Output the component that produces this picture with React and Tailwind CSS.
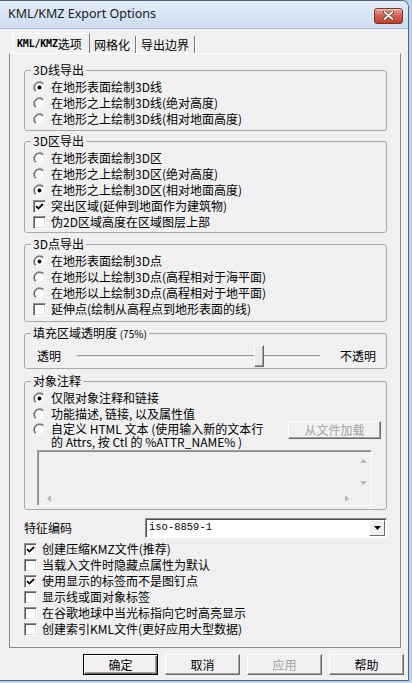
import React from "react";

const F = "font-['Noto_Sans_CJK_SC',sans-serif]";

function Radio({ checked }) {
  return (
    <svg width="13" height="13" viewBox="0 0 13 13" className="shrink-0">
      <circle cx="6.5" cy="6.5" r="5" fill="#fff" />
      <path d="M2.26 10.74 A6 6 0 0 1 10.74 2.26" fill="none" stroke="#8f8f8f" />
      <path d="M2.96 10.04 A5 5 0 0 1 10.04 2.96" fill="none" stroke="#505050" />
      <path d="M10.74 2.26 A6 6 0 0 1 2.26 10.74" fill="none" stroke="#ffffff" />
      <path d="M10.04 2.96 A5 5 0 0 1 2.96 10.04" fill="none" stroke="#e6e6e6" />
      {checked && <circle cx="6.5" cy="6.5" r="2" fill="#000" />}
    </svg>
  );
}

function Check({ checked }) {
  return (
    <span className="w-[13px] h-[13px] shrink-0 bg-white border border-t-[#8f8f8f] border-l-[#8f8f8f] border-r-white border-b-white shadow-[inset_1px_1px_0_#5a5a5a,inset_-1px_-1px_0_#e3e3e3] flex items-center justify-center">
      {checked && (
        <svg width="9" height="9" viewBox="0 0 9 9">
          <path d="M1 4.2 L3.4 6.6 L8 2" fill="none" stroke="#000" strokeWidth="1.8" />
        </svg>
      )}
    </span>
  );
}

function RRow({ checked, children }) {
  return (
    <div className="flex items-center h-[16px] gap-[5px]">
      <Radio checked={checked} />
      <span className="text-[12px] leading-[16px] whitespace-nowrap">{children}</span>
    </div>
  );
}

function CRow({ checked, children }) {
  return (
    <div className="flex items-center h-[16px] gap-[5px]">
      <Check checked={checked} />
      <span className="text-[12px] leading-[16px] whitespace-nowrap">{children}</span>
    </div>
  );
}

function Group({ label, className, children }) {
  return (
    <fieldset className={"border border-[#a9a9a9] rounded-[3px] px-[8px] min-w-0 " + (className || "")}>
      <legend className="ml-[-2px] px-[2px] text-[12px] leading-[14px] whitespace-nowrap">{label}</legend>
      {children}
    </fieldset>
  );
}

function Btn({ children, def, disabled }) {
  return (
    <div
      className={
        "w-[75px] h-[21px] flex items-center justify-center text-[12px] " +
        (def
          ? "border border-black bg-[#f0f0f0] shadow-[inset_1px_1px_0_#ffffff,inset_-1px_-1px_0_#696969,inset_-2px_-2px_0_#a0a0a0]"
          : "border border-t-white border-l-white border-r-[#696969] border-b-[#696969] bg-[#f0f0f0] shadow-[inset_-1px_-1px_0_#a0a0a0]") +
        (disabled ? " text-[#a0a0a0]" : " text-black")
      }
    >
      {children}
    </div>
  );
}

function Tri({ dir }) {
  const d = {
    up: "M0 4 L3.5 0 L7 4 Z",
    down: "M0 0 L7 0 L3.5 4 Z",
    left: "M4 0 L4 7 L0 3.5 Z",
    right: "M0 0 L0 7 L4 3.5 Z",
  }[dir];
  const w = dir === "up" || dir === "down" ? 7 : 4;
  const h = dir === "up" || dir === "down" ? 4 : 7;
  return (
    <svg width={w} height={h} viewBox={`0 0 ${w} ${h}`}>
      <path d={d} fill="#b8b8b8" />
    </svg>
  );
}

export default function App() {
  return (
    <div className={"w-[412px] h-[683px] bg-[#bcd1ea] overflow-hidden text-black " + F}>
      <div className="w-[409px] h-[681px] flex flex-col border-t border-r border-b border-[#51647e] rounded-tr-[7px] bg-[#d3e1f1]">
        {/* title bar */}
        <div className="h-[27px] shrink-0 flex items-center rounded-tr-[6px] bg-linear-to-b from-[#e2ecf7] to-[#cddef0]">
          <span className="pl-[8px] text-[12.5px] text-[#1a1a1a] font-['Noto_Sans',sans-serif] leading-none">
            KML/KMZ Export Options
          </span>
          <div className="ml-auto mr-[5px] mt-[2px] w-[29px] h-[16px] rounded-[3px] border border-[#7d3326] bg-linear-to-b from-[#e5a294] via-[#d0604c] to-[#c2402b] flex items-center justify-center shadow-[inset_0_1px_0_#f2c6bc]">
            <svg width="11" height="9" viewBox="0 0 11 9">
              <path d="M1.5 1 L9.5 8 M9.5 1 L1.5 8" stroke="#5a2419" strokeWidth="3.2" strokeLinecap="round" />
              <path d="M1.5 1 L9.5 8 M9.5 1 L1.5 8" stroke="#ffffff" strokeWidth="1.8" strokeLinecap="round" />
            </svg>
          </div>
        </div>

        {/* body */}
        <div className="flex-1 bg-[#f0f0f0] border-t border-[#a9bbd0] flex flex-col">
          {/* tabs */}
          <div className="mt-[4px] ml-[12px] h-[20px] flex items-end text-[12px]">
            <div className="w-[78px] h-[20px] pl-[4px] flex items-center border-l border-t border-white border-r border-r-[#7a7a7a] leading-none whitespace-nowrap">
              <span className="font-['DejaVu_Sans_Mono',monospace] text-[10px] font-bold tracking-[-0.2px]">KML/KMZ</span>
              <span>选项</span>
            </div>
            <div className="w-[46px] h-[17px] pl-[4px] flex items-center border-r border-[#7a7a7a] leading-none whitespace-nowrap shadow-[1px_0_0_#ffffff]">
              网格化
            </div>
            <div className="w-[59px] h-[17px] pl-[5px] flex items-center border-r border-[#7a7a7a] leading-none whitespace-nowrap shadow-[1px_0_0_#ffffff]">
              导出边界
            </div>
          </div>

          {/* panel */}
          <div className="ml-[9px] w-[392px] border border-t-white border-l-[#8a8a8a] border-r-[#8a8a8a] border-b-[#8a8a8a] pt-[9px] pl-[14px] pr-[13px] pb-[10px] flex flex-col">
            <Group label="3D线导出" className="pt-[2px] pb-[3px]">
              <RRow checked>在地形表面绘制3D线</RRow>
              <RRow>在地形之上绘制3D线(绝对高度)</RRow>
              <RRow>在地形之上绘制3D线(相对地面高度)</RRow>
            </Group>

            <Group label="3D区导出" className="mt-[3px] pt-[2px] pb-[2px]">
              <RRow>在地形表面绘制3D区</RRow>
              <RRow>在地形之上绘制3D区(绝对高度)</RRow>
              <RRow checked>在地形之上绘制3D区(相对地面高度)</RRow>
              <CRow checked>突出区域(延伸到地面作为建筑物)</CRow>
              <CRow>伪2D区域高度在区域图层上部</CRow>
            </Group>

            <Group label="3D点导出" className="mt-[4px] pt-[2px] pb-[4px]">
              <RRow checked>在地形表面绘制3D点</RRow>
              <RRow>在地形以上绘制3D点(高程相对于海平面)</RRow>
              <RRow>在地形以上绘制3D点(高程相对于地平面)</RRow>
              <CRow>延伸点(绘制从高程点到地形表面的线)</CRow>
            </Group>

            <Group
              label={
                <span>
                  填充区域透明度 <span className="text-[10px]">(75%)</span>
                </span>
              }
              className="mt-[4px] pt-[3px]"
            >
              <div className="flex items-center h-[24px] text-[12px]">
                <span className="ml-[4px] whitespace-nowrap">透明</span>
                <div className="ml-[16px] w-[243px] h-[22px] relative flex items-center">
                  <div className="w-full h-[3px] border-t border-[#a0a0a0] border-b border-b-white bg-[#dcdcdc]" />
                  <div className="absolute left-[177px] top-0 w-[10px] h-[22px] bg-[#ececec] border border-t-white border-l-white border-r-[#696969] border-b-[#696969] shadow-[inset_-1px_-1px_0_#a0a0a0]" />
                </div>
                <span className="ml-[20px] whitespace-nowrap">不透明</span>
              </div>
            </Group>

            <Group label="对象注释" className="mt-[5px] pt-[2px] pb-[3px]">
              <RRow checked>仅限对象注释和链接</RRow>
              <RRow>功能描述, 链接, 以及属性值</RRow>
              <div className="flex items-start h-[26px]">
                <div className="mt-[1px]">
                  <Radio />
                </div>
                <div className="ml-[5px] text-[12px] leading-[13px] whitespace-nowrap">
                  <div className="h-[13px]">自定义 HTML 文本 (使用输入新的文本行</div>
                  <div className="h-[13px]">的 Attrs, 按 Ctl 的 %ATTR_NAME% )</div>
                </div>
                <div className="ml-auto -mr-[3px] -mt-[1px] w-[93px] h-[18px] border border-t-white border-l-white border-r-[#696969] border-b-[#696969] shadow-[inset_-1px_-1px_0_#a0a0a0] flex items-center justify-center text-[12px] text-[#a3a3a3]">
                  从文件加载
                </div>
              </div>
              <div className="ml-[4px] mr-[6px] mt-[2px] h-[56px] border border-t-[#a0a0a0] border-l-[#a0a0a0] border-r-white border-b-white shadow-[inset_1px_1px_0_#8a8a8a] grid grid-cols-[1fr_16px] grid-rows-[1fr_14px]">
                <div />
                <div className="flex flex-col items-center pt-[8px] gap-[18px]">
                  <Tri dir="up" />
                  <Tri dir="down" />
                </div>
                <div className="flex items-center justify-between pl-[9px] pr-[6px]">
                  <Tri dir="left" />
                  <Tri dir="right" />
                </div>
                <div />
              </div>
            </Group>

            <div className="mt-[8px] h-[20px] flex items-center justify-between text-[12px]">
              <span className="whitespace-nowrap">特征编码</span>
              <div className="w-[242px] h-[20px] bg-white border border-t-[#8a8a8a] border-l-[#8a8a8a] border-r-white border-b-white shadow-[inset_1px_1px_0_#505050] flex items-center">
                <span className="pl-[3px] text-[10.5px] font-['Liberation_Mono',monospace]">iso-8859-1</span>
                <div className="ml-auto mr-[1px] w-[16px] h-[16px] bg-[#f0f0f0] border border-t-white border-l-white border-r-[#696969] border-b-[#696969] flex items-center justify-center">
                  <svg width="7" height="4" viewBox="0 0 7 4">
                    <path d="M0 0 L7 0 L3.5 4 Z" fill="#000" />
                  </svg>
                </div>
              </div>
            </div>

            <div className="mt-[3px] flex flex-col">
              <CRow checked>创建压缩KMZ文件(推荐)</CRow>
              <CRow>当载入文件时隐藏点属性为默认</CRow>
              <CRow checked>使用显示的标签而不是图钉点</CRow>
              <CRow>显示线或面对象标签</CRow>
              <CRow>在谷歌地球中当光标指向它时高亮显示</CRow>
              <CRow>创建索引KML文件(更好应用大型数据)</CRow>
            </div>
          </div>

          {/* buttons */}
          <div className="mt-[6px] pl-[83px] flex gap-[7px]">
            <Btn def>确定</Btn>
            <Btn>取消</Btn>
            <Btn disabled>应用</Btn>
            <Btn>帮助</Btn>
          </div>
        </div>
      </div>
    </div>
  );
}
